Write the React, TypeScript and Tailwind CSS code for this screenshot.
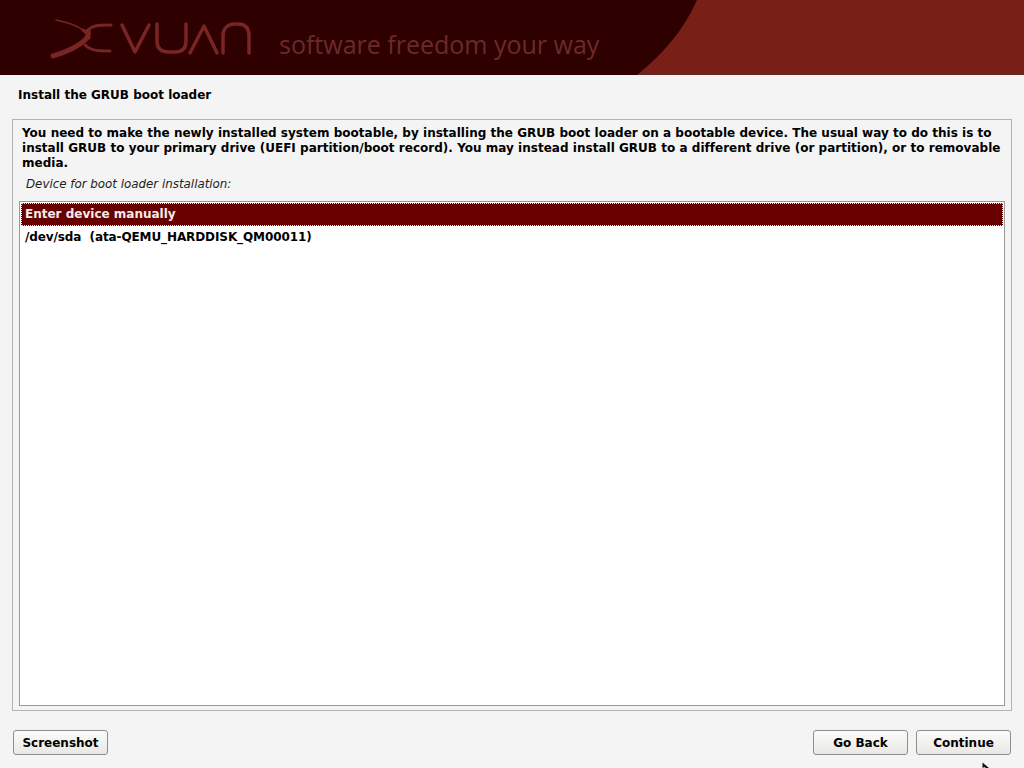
const font = "font-['DejaVu_Sans',sans-serif]";

function Banner() {
	return (
		<div className="relative h-[75px] bg-[#2e0000] overflow-hidden">
			<svg className="absolute inset-0" width="1024" height="75" viewBox="0 0 1024 75">
				<path d="M697 0 C684 30 662 55 637 75 L1024 75 L1024 0 Z" fill="#782018" />
				<path d="M638 74.5 L1024 74.5" stroke="#5a2a24" strokeWidth="1" />
				<g fill="none" stroke="#7a2424" strokeLinecap="round" strokeLinejoin="round">
					<path d="M56 20 C66 22 76 25 83 30" strokeWidth="1.5" />
					<path d="M83 30 C87 33 89 35 89 38" strokeWidth="3" />
					<path d="M53 56 C66 52 79 46 85 40 C88 37 89 34 88 31" strokeWidth="5" />
					<path d="M88 30 C92 26 96 25 111 25" strokeWidth="3" />
					<path d="M85 45 C90 50 95 51 110 51" strokeWidth="3" />
					<path d="M122 25 L135 52 L149 25" strokeWidth="3.5" />
					<path d="M157 24 L157 41 C157 49 162 52 169 52 L175 52 C182 52 186 49 186 41 L186 24" strokeWidth="3.5" />
					<path d="M190 53 L204 26 L217 53" strokeWidth="3.5" />
					<path d="M223 53 L223 36 C223 28 228 24 235 24 L238 24 C245 24 249 28 249 36 L249 53" strokeWidth="3.5" />
				</g>
			</svg>
			<span className="absolute left-[279px] top-[27px] font-['Open_Sans',sans-serif] text-[25px] leading-[34px] text-[#6b2a2a] whitespace-nowrap">
				software freedom your way
			</span>
		</div>
	);
}

function Btn({label, width}: {label: string; width: string}) {
	return (
		<button className={`h-[25px] ${width} rounded-[3px] border border-[#8e8e8a] bg-gradient-to-b from-[#fbfbfa] to-[#e9e8e5] text-[12px] font-bold text-black`}>
			{label}
		</button>
	);
}

export default function App() {
	return (
		<div className={`w-[1024px] h-[768px] overflow-hidden flex flex-col bg-[#f4f4f4] text-black ${font}`}>
			<Banner />
			<h1 className="mt-[13px] ml-[18px] text-[12px] leading-[15px] font-bold">Install the GRUB boot loader</h1>
			<div className="mt-[16px] mx-[12px] h-[592px] border border-[#b4b4b2] px-[6px] pt-[6px] pb-[4px] flex flex-col">
				<p className="px-[3px] text-[12px] leading-[15px] font-bold tracking-[0.02px]">
					You need to make the newly installed system bootable, by installing the GRUB boot loader on a bootable device. The usual way to do this is to install GRUB to your primary drive (UEFI partition/boot record). You may instead install GRUB to a different drive (or partition), or to removable media.
				</p>
				<p className="mt-[6px] ml-[7px] text-[11.85px] leading-[15px] italic text-[#222]">Device for boot loader installation:</p>
				<div className="mt-[9px] flex-1 border border-[#9a9a98] bg-white p-[1px]">
					<div className="h-[23px] border border-dotted border-[#f4e0e0] bg-[#690000] px-[3px] text-[12px] leading-[20px] font-bold text-[#f6e9e9]">Enter device manually</div>
					<div className="h-[23px] px-[4px] text-[12px] leading-[22px] font-bold whitespace-pre tracking-[-0.1px]">/dev/sda  (ata-QEMU_HARDDISK_QM00011)</div>
				</div>
			</div>
			<div className="mt-[19px] mx-[13px] flex items-center">
				<Btn label="Screenshot" width="w-[95px]" />
				<div className="flex-1" />
				<Btn label="Go Back" width="w-[95px]" />
				<div className="w-[8px]" />
				<Btn label="Continue" width="w-[95px]" />
			</div>
			{/* mouse pointer */}
			<svg className="absolute left-[982px] top-[762px]" width="10" height="6" viewBox="0 0 10 6">
				<path d="M0.5 0.5 L0.5 6 L2.5 5 L3.5 6 L7 6 Z" fill="#111" />
			</svg>
		</div>
	);
}
